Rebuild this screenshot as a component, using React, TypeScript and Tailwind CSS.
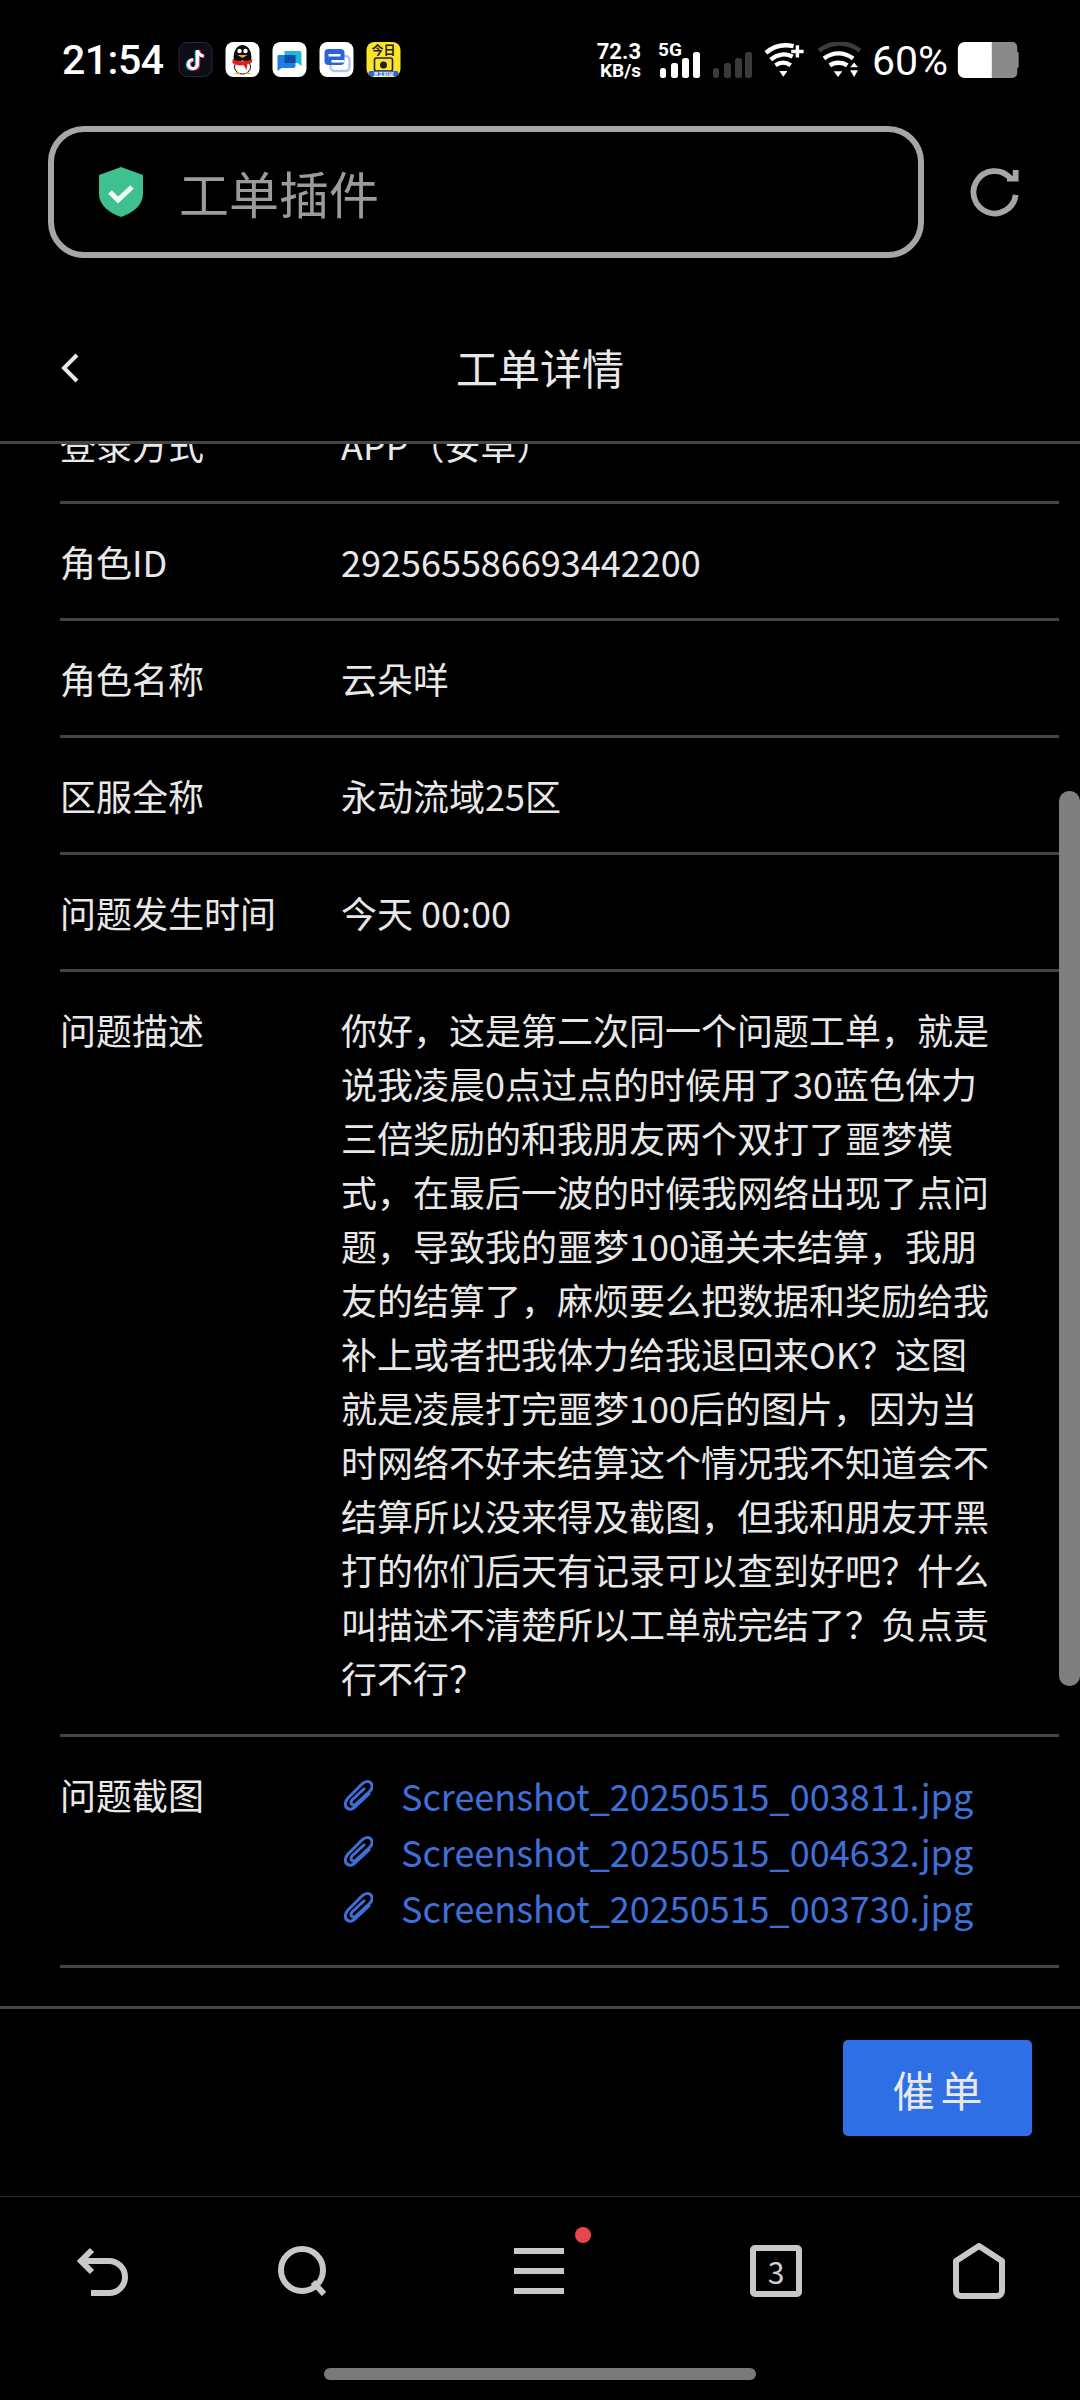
const CJK = "font-['Noto_Sans_CJK_SC','Noto_Sans',sans-serif]";
const ROBOTO = "font-['Roboto','Noto_Sans_CJK_SC',sans-serif]";

function AppIcons() {
  return (
    <div className="flex gap-[12px]">
      <svg width="35" height="35" viewBox="0 0 34 35">
        <rect x="0.5" y="0.5" width="33" height="34" rx="8" fill="#0d0d18" stroke="#2a2a35" />
        <path d="M19 8v14a4.5 4.5 0 1 1-4.5-4.5" fill="none" stroke="#25d5e0" strokeWidth="3.4" transform="translate(-1 0.6)" />
        <path d="M19 8v14a4.5 4.5 0 1 1-4.5-4.5M19 8c.5 3.5 3 5.5 6 6" fill="none" stroke="#f2325b" strokeWidth="3.4" transform="translate(1 0.6)" />
        <path d="M19 8v14a4.5 4.5 0 1 1-4.5-4.5M19 8c.5 3.5 3 5.5 6 6" fill="none" stroke="#fff" strokeWidth="3" />
      </svg>
      <svg width="35" height="35" viewBox="0 0 34 35">
        <rect width="34" height="35" rx="8" fill="#fff" />
        <ellipse cx="17" cy="15" rx="9" ry="12" fill="#0b0b0b" />
        <ellipse cx="17" cy="25" rx="8" ry="7" fill="#fff" stroke="#0b0b0b" />
        <circle cx="14" cy="9" r="2.2" fill="#fff" />
        <circle cx="20" cy="9" r="2.2" fill="#fff" />
        <path d="M12 13h10l-5 3z" fill="#f5a623" />
        <path d="M7 17c6 3 14 3 20 0l-1 4-4 1-1 6-3-5c-4 1-8 0-11-2z" fill="#e0201b" />
        <path d="M8 32l4-2 3 2zM26 32l-4-2-3 2z" fill="#f5a623" />
      </svg>
      <svg width="35" height="35" viewBox="0 0 34 35">
        <rect width="34" height="35" rx="8" fill="#fff" />
        <path d="M12 9h15a2 2 0 0 1 2 2v13l-4-3h-13z" fill="#21b8d6" />
        <path d="M6 13h15a2 2 0 0 1 2 2v9a2 2 0 0 1-2 2H9l-4 3V14a1 1 0 0 1 1-1z" fill="#1f7ee6" />
        <rect x="12" y="13" width="11" height="8" fill="#0d4fa8" />
      </svg>
      <svg width="35" height="35" viewBox="0 0 34 35">
        <rect width="34" height="35" rx="8" fill="#fff" />
        <rect x="11" y="14" width="19" height="15" rx="4" fill="#fff" stroke="#b4c6ee" strokeWidth="2.5" />
        <rect x="5" y="7" width="20" height="16" rx="4" fill="#2b63d9" />
        <rect x="9" y="12" width="12" height="2.5" fill="#fff" />
        <rect x="12" y="18" width="13" height="2.5" fill="#fff" />
      </svg>
      <svg width="35" height="35" viewBox="0 0 34 35">
        <rect width="34" height="35" rx="8" fill="#fbe32d" />
        <text x="17" y="13" textAnchor="middle" fontSize="12" fontWeight="700" fill="#222" fontFamily="Noto Sans CJK SC">今日</text>
        <rect x="8" y="16" width="18" height="13" rx="2" fill="none" stroke="#222" strokeWidth="1.6" />
        <circle cx="17" cy="23" r="3.5" fill="#222" />
        <rect x="2" y="29" width="30" height="5" rx="2" fill="#2b63d9" />
        <text x="17" y="33.5" textAnchor="middle" fontSize="5" fontWeight="700" fill="#fff" fontFamily="Noto Sans CJK SC">真实时间</text>
      </svg>
    </div>
  );
}

function StatusBar() {
  return (
    <div className="flex h-[126px] shrink-0 items-start pt-[42px] pr-[60px] pl-[62px] text-white">
      <span className={`w-[116px] text-[41px] leading-[36px] font-medium tracking-[-0.5px] ${ROBOTO}`}>21:54</span>
      <AppIcons />
      <div className={`ml-auto flex ${ROBOTO}`}>
        <div className="flex w-[44px] flex-col items-end font-bold">
          <span className="text-[22px] leading-[20px]">72.3</span>
          <span className="text-[19px] leading-[17px]">KB/s</span>
        </div>
        <div className="relative ml-[17px] h-[36px] w-[94px]">
          <span className="absolute top-0 left-0 text-[19px] leading-[15px] font-bold">5G</span>
          <svg className="absolute top-[10px] left-0" width="94" height="26" viewBox="0 0 94 26">
            <rect x="2" y="16" width="6" height="10" rx="2.5" fill="#fff" />
            <rect x="13" y="11" width="7" height="15" rx="2.5" fill="#fff" />
            <rect x="24" y="6" width="7" height="20" rx="2.5" fill="#fff" />
            <rect x="35" y="0" width="7" height="26" rx="2.5" fill="#fff" />
            <rect x="55" y="16" width="6" height="10" rx="2.5" fill="#3a3a3a" />
            <rect x="66" y="11" width="7" height="15" rx="2.5" fill="#3a3a3a" />
            <rect x="77" y="6" width="7" height="20" rx="2.5" fill="#3a3a3a" />
            <rect x="87" y="0" width="7" height="26" rx="2.5" fill="#3a3a3a" />
          </svg>
        </div>
        <svg className="ml-[12px]" width="42" height="36" viewBox="0 0 44 37">
          <path d="M2 11c9-8 20-9 29-7" fill="none" stroke="#fff" strokeWidth="4.5" />
          <path d="M7 18c7-6 16-7 23-3" fill="none" stroke="#fff" strokeWidth="4.5" />
          <path d="M12 24c5-3.5 11-3.5 16 0" fill="none" stroke="#fff" strokeWidth="4.5" />
          <path d="M16 30h8.5l-4.25 6z" fill="#fff" />
          <path d="M35 3v13M28.5 9.5h13" stroke="#fff" strokeWidth="3.6" />
        </svg>
        <svg className="ml-[12px]" width="43" height="36" viewBox="0 0 44 37">
          <path d="M1 9c12-10 30-10 42 0" fill="none" stroke="#3c3c3c" strokeWidth="4.5" />
          <path d="M6 17c9-7 21-7 30 0" fill="none" stroke="#fff" strokeWidth="4.5" />
          <path d="M12 24c5-3.5 13-3.5 18 0" fill="none" stroke="#fff" strokeWidth="4.5" />
          <path d="M16 30h9l-4.5 6z" fill="#fff" />
          <path d="M33 26l4-5 4 5zM33 29l4 7 4-7z" fill="#fff" />
        </svg>
        <span className="ml-[11px] w-[75px] text-[41px] leading-[38px]">60%</span>
        <svg className="ml-[10px]" width="63" height="36" viewBox="0 0 63 37">
          <path d="M35 0h21a5 5 0 0 1 5 5v5c1 0 1.5 1 1.5 2v13c0 1-.5 2-1.5 2v5a5 5 0 0 1-5 5H35z" fill="#8a8a8a" />
          <path d="M7 0h28v37H7a7 7 0 0 1-7-7V7a7 7 0 0 1 7-7z" fill="#fff" />
        </svg>
      </div>
    </div>
  );
}

function AddressBar() {
  return (
    <div className="flex shrink-0 items-center pl-[48px]">
      <div className="flex h-[132px] w-[876px] items-center rounded-[36px] border-[6px] border-[#a6a6a6] pl-[44px]">
        <svg width="46" height="50" viewBox="0 0 44 50">
          <path d="M22 0l22 8v19c0 11-10 19-22 23C10 46 0 38 0 27V8z" fill="#3fc08f" />
          <path d="M11 25l8 8 14-13" fill="none" stroke="#f2fff9" strokeWidth="5" />
        </svg>
        <span className="ml-[35px] text-[50px] leading-none text-[#9b9b9b]">工单插件</span>
      </div>
      <svg className="ml-[46px]" width="49" height="50" viewBox="0 0 50 52" fill="none">
        <path d="M47 29a22 22 0 1 1-6-18" stroke="#a6a6a6" strokeWidth="6" />
        <path d="M38 12h9V3" stroke="#a6a6a6" strokeWidth="6" />
      </svg>
    </div>
  );
}

function Row({ label, children }: { label: string; children: React.ReactNode }) {
  return (
    <div className="flex border-b-[3px] border-[#444] py-[30px] text-[36px] leading-[54px] text-[#e8e8e8]">
      <div className="w-[281px] shrink-0">{label}</div>
      <div className="min-w-0 flex-1">{children}</div>
    </div>
  );
}

function Attachment({ name }: { name: string }) {
  return (
    <div className="flex h-[56px] items-center text-[#3f6fd8]">
      <svg className="ml-[2px]" width="30" height="33" viewBox="0 0 30 33" fill="none" stroke="#3f6fd8" strokeWidth="3">
        <path d="M27 14 12 28C8 32 3 30 2.5 26 2 23 3 21 5 19L19 5C22 2 26 2 28 4 30 7 29 10 27 12L13 25C11 27 8 26 8 23 8 22 9 21 10 20L22 9" />
      </svg>
      <span className="ml-[28px] whitespace-nowrap">{name}</span>
    </div>
  );
}

function DetailList() {
  return (
    <div className="relative min-h-0 flex-1 overflow-hidden">
      <div className="mt-[-57px] mr-[21px] ml-[60px]">
        <Row label="登录方式">APP（安卓）</Row>
        <Row label="角色ID">292565586693442200</Row>
        <Row label="角色名称">云朵咩</Row>
        <Row label="区服全称">永动流域25区</Row>
        <Row label="问题发生时间">今天 00:00</Row>
        <Row label="问题描述">
          <div className="w-[656px]">
            你好，这是第二次同一个问题工单，就是说我凌晨0点过点的时候用了30蓝色体力三倍奖励的和我朋友两个双打了噩梦模式，在最后一波的时候我网络出现了点问题，导致我的噩梦100通关未结算，我朋友的结算了，麻烦要么把数据和奖励给我补上或者把我体力给我退回来OK？这图就是凌晨打完噩梦100后的图片，因为当时网络不好未结算这个情况我不知道会不结算所以没来得及截图，但我和朋友开黑打的你们后天有记录可以查到好吧？什么叫描述不清楚所以工单就完结了？负点责行不行？
          </div>
        </Row>
        <Row label="问题截图">
          <Attachment name="Screenshot_20250515_003811.jpg" />
          <Attachment name="Screenshot_20250515_004632.jpg" />
          <Attachment name="Screenshot_20250515_003730.jpg" />
        </Row>
      </div>
      {/* overlay scrollbar */}
      <div className="absolute top-[347px] right-0 h-[895px] w-[21px] rounded-[10px] bg-[#7f7f7f]" />
    </div>
  );
}

function TabBar() {
  return (
    <div className="flex h-[172px] shrink-0 items-start border-t border-[#2a2a2a] pt-[39px] pl-[75px]">
      <div className="flex h-[70px] items-center">
        <svg width="53" height="49" viewBox="0 0 53 49" fill="none" stroke="#c8c8c8" strokeWidth="6">
          <path d="M17 3 6 14l11 11" />
          <path d="M6 14H34a16 16 0 0 1 0 32H16" />
        </svg>
        <svg className="ml-[150px]" width="50" height="50" viewBox="0 0 50 50" fill="none" stroke="#c8c8c8" strokeWidth="6">
          <circle cx="24" cy="24" r="21" />
          <path d="M35 36 46 48" />
        </svg>
        <div className="relative ml-[186px]">
          <div className="flex w-[50px] flex-col gap-[14px]">
            <div className="h-[6px] bg-[#c8c8c8]" />
            <div className="h-[6px] bg-[#c8c8c8]" />
            <div className="h-[6px] bg-[#c8c8c8]" />
          </div>
          <div className="absolute top-[-21px] right-[-27px] size-[16px] rounded-full bg-[#e8454d]" />
        </div>
        <div className="ml-[186px] flex size-[52px] items-center justify-center rounded-[5px] border-[6px] border-[#c8c8c8] text-[30px] leading-none text-[#d0d0d0]">3</div>
        <svg className="ml-[151px]" width="52" height="56" viewBox="0 0 52 56" fill="none" stroke="#c8c8c8" strokeWidth="6" strokeLinejoin="round">
          <path d="M26 3 49 18V48a5 5 0 0 1-5 5H8a5 5 0 0 1-5-5V18Z" />
        </svg>
      </div>
    </div>
  );
}

export default function App() {
  return (
    <div className={`flex h-[2400px] w-[1080px] flex-col overflow-hidden bg-black ${CJK}`}>
      <StatusBar />
      <AddressBar />
      <div className="relative flex h-[186px] shrink-0 items-center justify-center border-b-[3px] border-[#444] pt-[33px] text-[42px] text-[#e8e8e8]">
        <svg className="absolute top-[94px] left-[60px]" width="20" height="32" viewBox="0 0 20 32" fill="none" stroke="#e8e8e8" strokeWidth="4">
          <path d="M17 3 4 16l13 13" />
        </svg>
        工单详情
      </div>
      <DetailList />
      <div className="flex h-[190px] shrink-0 items-start justify-end border-t-[3px] border-[#444] pt-[31px] pr-[48px]">
        <button className="flex h-[96px] w-[189px] items-center justify-center rounded-[5px] bg-[#2f6fe6] pl-[6px] text-[42px] tracking-[6px] text-[#e8e8e8]">催单</button>
      </div>
      <TabBar />
      <div className="flex h-[32px] shrink-0 justify-center">
        <div className="h-[12px] w-[432px] rounded-full bg-[#7a7a7a]" />
      </div>
    </div>
  );
}
